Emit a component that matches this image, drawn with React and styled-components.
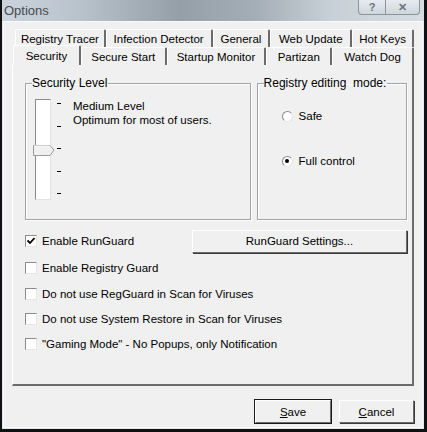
import styled, { createGlobalStyle } from "styled-components";

const Global = createGlobalStyle`
  html, body { margin: 0; padding: 0; background: #fff; }
  body { font-family: "Liberation Sans", Arial, sans-serif; font-size: 11px; color: #000; }
`;

const Window = styled.div`
  width: 427px;
  height: 432px;
  box-sizing: border-box;
  border-left: 2px solid #111;
  border-right: 3px solid #111;
  border-bottom: 3px solid #111;
  background: #dfe5ea;
  display: flex;
  flex-direction: column;
`;

const TitleBar = styled.div`
  height: 21px;
  flex: none;
  display: flex;
  justify-content: space-between;
  align-items: flex-start;
  background: linear-gradient(90deg, #cbd4dc 0%, #b9c3cb 18%, #959fa8 42%, #a4aeb6 60%, #c8d0d7 78%, #d6dde2 100%);
`;

const Caption = styled.div`
  font-size: 13px;
  color: #454b50;
  padding: 3px 0 0 2px;
`;

const CaptionButtons = styled.div`
  display: flex;
  margin-right: 4px;
  height: 14px;
  border: 1px solid #8a949c;
  border-top: none;
  border-radius: 0 0 4px 4px;
  background: linear-gradient(#e6ebef, #cfd6dc);
`;

const CapBtn = styled.div`
  width: ${p => p.w}px;
  display: flex;
  align-items: center;
  justify-content: center;
  color: #6d757c;
  font-size: 11px;
  font-weight: bold;
  & + & { border-left: 1px solid #8a949c; }
`;

const Client = styled.div`
  flex: 1;
  margin: 0 1px 1px 1px;
  background: #f0f0f0;
  border: 1px solid #fafafa;
  display: flex;
  flex-direction: column;
  padding: 7px 8px 0 8px;
`;

const TabRow = styled.div`
  display: flex;
  padding-left: 3px;
  height: 18px;
  align-items: flex-end;
`;

const Tab = styled.div`
  box-sizing: border-box;
  width: ${p => p.w}px;
  height: ${p => (p.active ? 20 : 18)}px;
  display: flex;
  align-items: center;
  justify-content: center;
  font-size: 11.5px;
  border-top: 1px solid #fff;
  border-left: 1px solid #fff;
  border-right: 2px solid #6b6b6b;
  border-radius: 2px 2px 0 0;
  background: #f0f0f0;
  padding-top: ${p => (p.active ? 0 : 1)}px;
  margin-left: ${p => (p.active ? -2 : 0)}px;
  position: relative;
  z-index: ${p => (p.active ? 2 : 1)};
`;

const Panel = styled.div`
  height: 322px;
  box-sizing: border-box;
  border-top: 1px solid #fff;
  border-left: 1px solid #fff;
  border-right: 2px solid #6b6b6b;
  border-bottom: 2px solid #6b6b6b;
  margin-top: -1px;
  padding: 11px 5px 0 12px;
  display: flex;
  flex-direction: column;
`;

const Groups = styled.div`
  display: flex;
  gap: 6px;
`;

const Group = styled.fieldset`
  margin: 0;
  min-inline-size: 0;
  box-sizing: border-box;
  width: ${p => p.w}px;
  height: 144px;
  border: 1px solid #a3a3a3;
  box-shadow: inset 1px 1px #fff, 1px 1px #fff;
  padding: 0;
  display: flex;
  legend {
    font-size: 12px;
    padding: 0 1px 0 0;
    margin-left: 6px;
  }
`;

const LevelBody = styled.div`
  display: flex;
  padding: 9px 0 0 9px;
  gap: 6px;
`;

const Track = styled.div`
  position: relative;
  width: 14px;
  height: 99px;
  background: #fff;
  border-top: 1px solid #8b8b8b;
  border-left: 1px solid #8b8b8b;
  border-right: 1px solid #e3e3e3;
  border-bottom: 1px solid #e3e3e3;
`;

const Thumb = styled.svg`
  position: absolute;
  left: -3px;
  top: 45px;
`;

const Ticks = styled.div`
  display: flex;
  flex-direction: column;
  justify-content: space-between;
  padding: 4px 0 4px;
  height: 91px;
`;

const Tick = styled.div`
  width: 4px;
  height: 1px;
  background: #000;
`;

const LevelText = styled.div`
  padding: 0 0 0 6px;
  line-height: 14px;
  font-size: 11.5px;
`;

const RadioList = styled.div`
  display: flex;
  flex-direction: column;
  gap: 31px;
  padding: 19px 0 0 24px;
`;

const RadioRow = styled.label`
  display: flex;
  align-items: center;
  gap: 6px;
  font-size: 11.5px;
  height: 14px;
`;

const Radio = styled.span`
  width: 11px;
  height: 11px;
  border-radius: 50%;
  box-sizing: border-box;
  background: #fff;
  border: 1px solid;
  border-color: #8b8b8b #e6e6e6 #e6e6e6 #8b8b8b;
  display: flex;
  align-items: center;
  justify-content: center;
  &::after {
    content: "";
    width: 4px;
    height: 4px;
    border-radius: 50%;
    background: ${p => (p.on ? "#000" : "transparent")};
  }
`;

const Options = styled.div`
  display: flex;
  flex-direction: column;
  margin-top: 8px;
`;

const CheckRow = styled.div`
  display: flex;
  align-items: center;
  height: ${p => p.h}px;
`;

const CheckLabel = styled.label`
  display: flex;
  align-items: center;
  gap: 5px;
  font-size: 11.5px;
  flex: 1;
`;

const Box = styled.span`
  width: 12px;
  height: 12px;
  box-sizing: border-box;
  background: #fff;
  border: 1px solid;
  border-color: #8b8b8b #e6e6e6 #e6e6e6 #8b8b8b;
  display: flex;
  align-items: center;
  justify-content: center;
`;

const Button = styled.button`
  font-family: "Liberation Sans", Arial, sans-serif;
  font-size: 11.5px;
  color: #000;
  width: ${p => p.w}px;
  height: 23px;
  box-sizing: border-box;
  background: #f0f0f0;
  border: 1px solid;
  border-color: #fff #6b6b6b #6b6b6b #fff;
  box-shadow: ${p => (p.def ? "0 0 0 1px #1a1a1a" : "1px 1px 0 #3a3a3a")};
  padding: 0;
  u { text-decoration: underline; }
`;

const Footer = styled.div`
  display: flex;
  justify-content: flex-end;
  gap: 8px;
  padding: 14px 0 0 0;
`;

function Check({ checked }) {
  return (
    <Box>
      {checked && (
        <svg width="8" height="8" viewBox="0 0 8 8">
          <path d="M0.5 3.5 L3 6 L7.5 1" stroke="#000" strokeWidth="1.8" fill="none" />
        </svg>
      )}
    </Box>
  );
}

const backTabs = [
  ["Registry Tracer", 91],
  ["Infection Detector", 107],
  ["General", 58],
  ["Web Update", 82],
  ["Hot Keys", 62],
];

const frontTabs = [
  ["Security", 68],
  ["Secure Start", 86],
  ["Startup Monitor", 100],
  ["Partizan", 66],
  ["Watch Dog", 82],
];

const checks = [
  ["Do not use RegGuard in Scan for Viruses", false],
  ["Do not use System Restore in Scan for Viruses", false],
  ["\"Gaming Mode\" - No Popups, only Notification", false],
];

export default function App() {
  return (
    <>
      <Global />
      <Window>
        <TitleBar>
          <Caption>Options</Caption>
          <CaptionButtons>
            <CapBtn w={26}>?</CapBtn>
            <CapBtn w={33}>✕</CapBtn>
          </CaptionButtons>
        </TitleBar>
        <Client>
          <TabRow>
            {backTabs.map(([t, w]) => (
              <Tab key={t} w={w}>{t}</Tab>
            ))}
          </TabRow>
          <TabRow>
            {frontTabs.map(([t, w], i) => (
              <Tab key={t} w={w} active={i === 0}>{t}</Tab>
            ))}
          </TabRow>
          <Panel>
            <Groups>
              <Group w={228}>
                <legend>Security Level</legend>
                <LevelBody>
                  <Track>
                    <Thumb width="22" height="11" viewBox="0 0 22 11">
                      <path d="M0.5 0.5 H17 L21 5 L17 10.5 H0.5 Z" fill="#f0f0f0" stroke="#9a9a9a" />
                      <path d="M1 1 H16.5" stroke="#fff" />
                    </Thumb>
                  </Track>
                  <Ticks>
                    <Tick /><Tick /><Tick /><Tick /><Tick />
                  </Ticks>
                  <LevelText>
                    Medium Level
                    <br />
                    Optimum for most of users.
                  </LevelText>
                </LevelBody>
              </Group>
              <Group w={152}>
                <legend>Registry editing&nbsp; mode:</legend>
                <RadioList>
                  <RadioRow><Radio />Safe</RadioRow>
                  <RadioRow><Radio on />Full control</RadioRow>
                </RadioList>
              </Group>
            </Groups>
            <Options>
              <CheckRow h={26}>
                <CheckLabel><Check checked />Enable RunGuard</CheckLabel>
                <Button w={215}>RunGuard Settings...</Button>
              </CheckRow>
              <CheckRow h={27}>
                <CheckLabel><Check />Enable Registry Guard</CheckLabel>
              </CheckRow>
              {checks.map(([t, c]) => (
                <CheckRow key={t} h={25}>
                  <CheckLabel><Check checked={c} />{t}</CheckLabel>
                </CheckRow>
              ))}
            </Options>
          </Panel>
          <Footer>
            <Button w={76} def><u>S</u>ave</Button>
            <Button w={75}><u>C</u>ancel</Button>
          </Footer>
        </Client>
      </Window>
    </>
  );
}
